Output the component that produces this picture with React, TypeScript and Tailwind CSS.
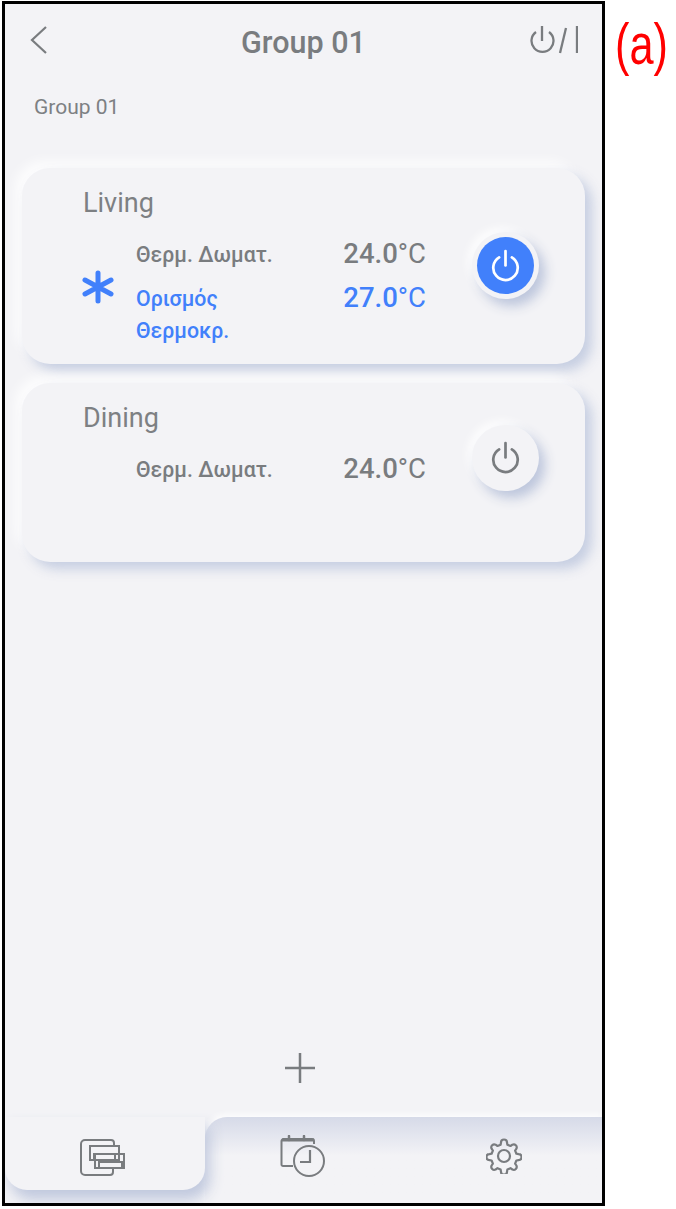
const GRAY = '#797c7f'

function PowerIcon({ className }: { className: string }) {
  return (
    <svg viewBox="0 0 32 36" fill="none" stroke="currentColor" strokeWidth={3} strokeLinecap="round" className={className}>
      <path d="M16 2v16" />
      <path d="M9 9a13.500 13.500 0 1 0 14 0" />
    </svg>
  )
}

function StackIcon() {
  return (
    <svg width="46" height="38" viewBox="0 0 46 38" fill="none" stroke={GRAY} strokeWidth={2}>
      <path d="M34 7V5a3 3 0 0 0-3-3H5a4 4 0 0 0-4 4v27a4 4 0 0 0 4 4h25a3 3 0 0 0 3-3v-3" />
      <rect x="10" y="8" width="29" height="14" fill="#f3f3f6" />
      <rect x="14" y="16" width="21" height="6" />
      <rect x="15" y="16" width="29" height="14" />
      <rect x="19" y="24" width="23" height="6" />
    </svg>
  )
}

function ScheduleIcon() {
  return (
    <svg width="46" height="42" viewBox="0 0 46 42" fill="none" stroke={GRAY} strokeWidth={2}>
      <path d="M13 31H3a1.500 1.500 0 0 1-1.500-1.500V6A2 2 0 0 1 3.500 4H32a2 2 0 0 1 2 2v3" />
      <path d="M2 5h32" strokeWidth={3} />
      <path d="M9 1v4M24 1v4" strokeWidth={2.500} strokeLinecap="round" />
      <circle cx="29" cy="26" r="15" />
      <path d="M30 15v12H20" strokeWidth={2.200} />
    </svg>
  )
}

function GearIcon() {
  return (
    <svg width="36" height="36" viewBox="0 0 36 36" fill="none" stroke={GRAY} strokeWidth={2.200} strokeLinejoin="round">
      <circle cx="18" cy="18" r="6" />
      <path d="M15 4.500a3 3 0 0 1 6 0l.4 2.200 3.100 1.300 1.900-1.300a3 3 0 0 1 4 4l-1.300 1.900 1.300 3.100 2.200.4a3 3 0 0 1 0 6l-2.200.4-1.300 3.100 1.300 1.900a3 3 0 0 1-4 4l-1.900-1.300-3.100 1.300-.4 2.200a3 3 0 0 1-6 0l-.4-2.200-3.100-1.300-1.900 1.300a3 3 0 0 1-4-4l1.300-1.900-1.300-3.100-2.200-.4a3 3 0 0 1 0-6l2.200-.4 1.300-3.100-1.300-1.900a3 3 0 0 1 4-4l1.900 1.300 3.100-1.300z" />
    </svg>
  )
}

function SnowIcon() {
  return (
    <svg width="34" height="34" viewBox="0 0 34 34" stroke="#4180fb" strokeWidth={5} strokeLinecap="round" className="-ml-[2px]">
      <path d="M17 3v28M4 10l26 14M30 10L4 24" />
    </svg>
  )
}

function Reading({ label, value, blue }: { label: string; value: string; blue?: boolean }) {
  const [num] = value.split('°')
  return (
    <div className={`flex items-start justify-between ${blue ? 'text-[#4180fb]' : 'text-[#797c7f]'}`}>
      <span className="w-[150px] pt-[1px] text-[21.300px] leading-[32px] font-medium">{label}</span>
      <span className="text-[27.500px] leading-[31px]">
        <span className="font-medium">{num}</span>°C
      </span>
    </div>
  )
}

function Card({ name, active, className }: { name: string; active?: boolean; className: string }) {
  return (
    <div className={`mx-[17px] flex rounded-[28px] bg-[#f3f3f6] shadow-[7px_7px_12px_rgba(190,200,222,0.85),-7px_-7px_12px_rgba(255,255,255,0.8)] ${className}`}>
      <div className="flex-1 pl-[61px]">
        <div className="text-[27px] leading-[36px] text-[#7d8083]">{name}</div>
        <div className="mt-[17px] flex items-start">
          <div className={`w-[53px] shrink-0 ${active ? 'pt-[32px]' : ''}`}>{active && <SnowIcon />}</div>
          <div className="flex w-[290px] flex-col gap-[11px]">
            <Reading label="Θερμ. Δωματ." value="24.0°C" />
            {active && <Reading label="Ορισμός Θερμοκρ." value="27.0°C" blue />}
          </div>
        </div>
      </div>
      {active ? (
        <div className="mr-[46px] mt-[47px] flex h-[67px] w-[67px] items-center justify-center rounded-full bg-[#f3f3f6] shadow-[6px_7px_12px_rgba(185,195,218,0.95),-4px_-4px_10px_rgba(255,255,255,0.9)]">
          <div className="flex h-[57px] w-[57px] items-center justify-center rounded-full bg-[#4180fb]">
            <PowerIcon className="h-[33px] w-[29px] text-white" />
          </div>
        </div>
      ) : (
        <div className="mr-[46px] mt-[25px] flex h-[66px] w-[67px] items-center justify-center rounded-full bg-[#f3f3f6] pb-[2px] shadow-[6px_7px_12px_rgba(185,195,218,0.95),-4px_-4px_10px_rgba(255,255,255,0.9)]">
          <PowerIcon className="h-[33px] w-[29px] text-[#797c7f]" />
        </div>
      )}
    </div>
  )
}

export default function App() {
  return (
    <div className="flex h-[1209px] w-[676px] items-start overflow-hidden bg-white pl-[2px] pt-[1px] [font-family:Roboto,sans-serif]">
      <div className="flex h-[1205px] w-[603px] shrink-0 flex-col overflow-hidden border-[3px] border-black bg-[#f3f3f6]">
        <div className="flex h-[76px] items-center pl-[24px] pr-[24px] pt-[2px]">
          <div className="flex-1">
            <svg width="20" height="32" viewBox="0 0 20 32" fill="none" stroke={GRAY} strokeWidth={2.200} className="mb-[7px]">
              <path d="M17 3L3 16l14 13" />
            </svg>
          </div>
          <div className="text-[30.500px] font-medium text-[#797c7f]">Group 01</div>
          <div className="mb-[6px] flex flex-1 justify-end text-[#797c7f]">
            <svg width="48" height="32" viewBox="0 0 48 32" fill="none" stroke="currentColor" strokeWidth={2.300}>
              <path d="M12 2v15" />
              <path d="M6 8a11 11 0 1 0 13 0" />
              <path d="M36 4l-6 25" />
              <path d="M47 2v27" />
            </svg>
          </div>
        </div>
        <div className="pl-[29px] pt-[12px] text-[21px] leading-[30px] text-[#7d8083]">Group 01</div>
        <div className="mt-[46px]">
          <Card name="Living" active className="h-[196px] pt-[17px]" />
          <Card name="Dining" className="mt-[19px] h-[179px] pt-[17px]" />
        </div>
        <div className="flex flex-1 items-end justify-center pb-[33px] pr-[8px]">
          <svg width="32" height="32" viewBox="0 0 32 32" stroke={GRAY} strokeWidth={2.500}>
            <path d="M1 16h30M16 1v30" />
          </svg>
        </div>
        <div className="flex h-[86px]">
          <div className="relative z-10 flex h-[73px] w-[200px] items-start justify-center rounded-b-[22px] bg-[#f3f3f6] pr-[4px] pt-[21px] shadow-[5px_10px_14px_rgba(190,198,220,0.95)]">
            <StackIcon />
          </div>
          <div className="flex flex-1 justify-between rounded-tl-[22px] bg-linear-to-b from-[#d6dae8] to-[#f3f3f6] to-[45%] pl-[75px] pr-[80px] pt-[18px] shadow-[0_-3px_6px_rgba(255,255,255,0.8)]">
            <ScheduleIcon />
            <div className="pt-[3px]">
              <GearIcon />
            </div>
          </div>
        </div>
      </div>
      <div className="ml-[10px] w-[60px] origin-top-left scale-x-[0.76] pt-[4px] text-[57px] leading-[78px] whitespace-nowrap text-[#ff0000] [font-family:'Liberation_Sans',sans-serif]">(a)</div>
    </div>
  )
}
